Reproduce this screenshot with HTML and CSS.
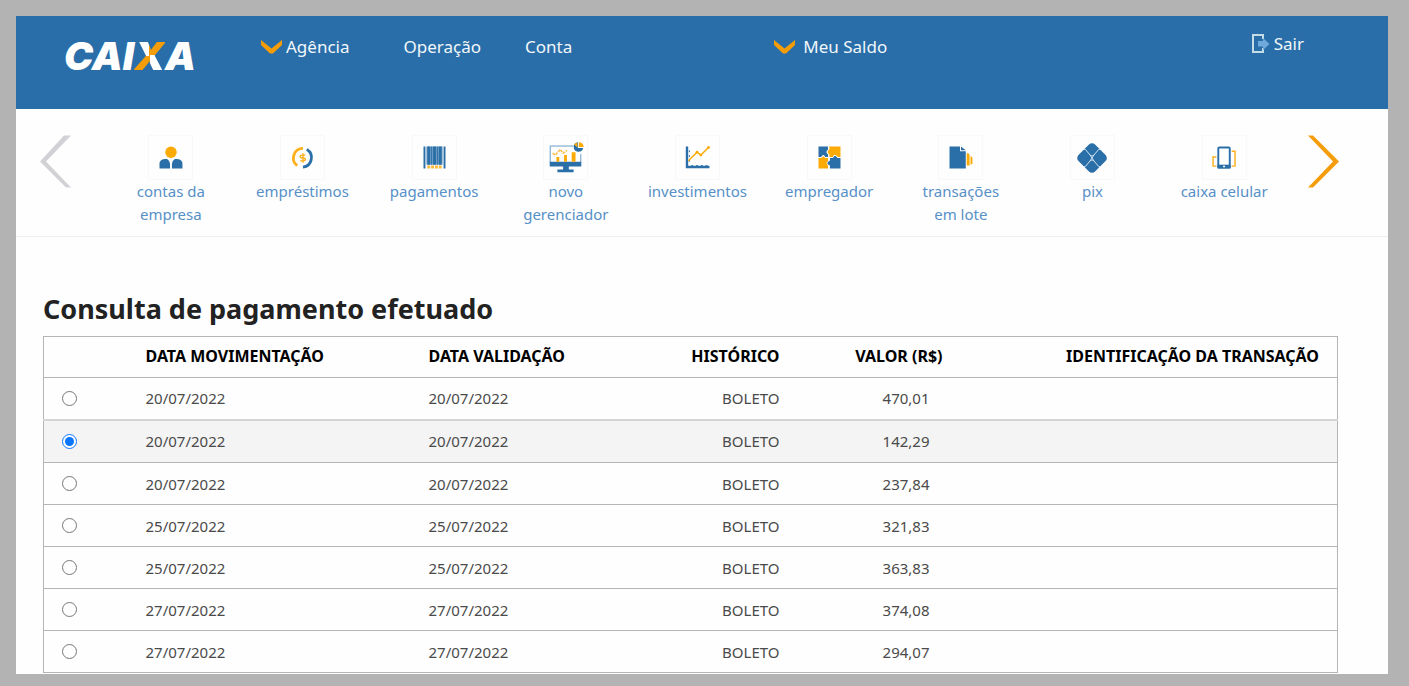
FILE: index.html
```html
<!DOCTYPE html>
<html lang="pt-BR">
<head>
<meta charset="utf-8">
<title>Consulta de pagamento efetuado</title>
<link rel="stylesheet" href="styles.css">
</head>
<body>
<div class="page">
  <header class="topbar">
    <a class="logo" href="#">CAI<span class="logo-x">X</span>A</a>
    <div class="account">
      <button class="top-link top-link-tight" type="button"><svg class="chevron" viewBox="0 0 21 14" aria-hidden="true"><path d="M0 0L10.500 8.500L21 0V5L12 13.500H9L0 5Z"/></svg>Agência</button>
      <button class="top-link" type="button">Operação</button>
      <button class="top-link" type="button">Conta</button>
    </div>
    <button class="top-link balance" type="button"><svg class="chevron" viewBox="0 0 21 14" aria-hidden="true"><path d="M0 0L10.500 8.500L21 0V5L12 13.500H9L0 5Z"/></svg>Meu Saldo</button>
    <a class="top-link exit" href="#"><svg class="exit-icon" viewBox="0 0 18 20" aria-hidden="true"><path d="M11 5V1H1V18H11V14" fill="none" stroke="#c3dce6" stroke-width="2"/><path d="M6 7H11V4L17.500 10L11 16V12.500H6Z" fill="#6fa9dc"/></svg>Sair</a>
  </header>

  <nav class="services" aria-label="Serviços">
    <button class="arrow arrow-prev" type="button" aria-label="Anterior"><svg viewBox="0 0 32 52"><path d="M24 0H31L6 26L31 52H26L0 26Z" fill="#d2d2d6"/></svg></button>
    <ul class="service-list">
      <li><a class="service" href="#"><svg class="service-icon" viewBox="0 0 45 45"><circle cx="23" cy="17" r="6" fill="#fcab06"/><path d="M11 34V28Q12 24 17 24H19Q22 26 22 29V34ZM24 34V29Q24 26 27 24H29Q34 24 35 28V34Z" fill="#2a6fa8"/></svg>contas da empresa</a></li>
      <li><a class="service" href="#"><svg class="service-icon" viewBox="0 0 45 45"><path d="M23 13A10 10 0 0 0 17 31" fill="none" stroke="#fcb01c" stroke-width="3"/><path d="M27 14A10 10 0 0 1 23 32.500" fill="none" stroke="#2a6fa8" stroke-width="3"/><path d="M25.500 20H22Q20 20 20 21.500T22 23H23.500Q25.500 23 25.500 24.500T23.500 26H20M23 18V28" fill="none" stroke="#fcb01c" stroke-width="1.500"/></svg>empréstimos</a></li>
      <li><a class="service" href="#"><svg class="service-icon" viewBox="0 0 45 45"><path d="M11 11H13V34H11ZM15 11H18V30H15ZM19 11H20V30H19ZM21 11H24V30H21ZM25 11H26V30H25ZM27 11H30V30H27ZM32 11H34V34H32Z" fill="#2a6fa8"/><path d="M14 11H31V30H14Z" fill="#2a6fa8" opacity=".65"/><path d="M15 32.500H31" stroke="#fcb83a" stroke-width="3" stroke-dasharray="3 1"/></svg>pagamentos</a></li>
      <li><a class="service" href="#"><svg class="service-icon" viewBox="0 0 45 45"><path d="M7 10.500H31M6.500 10V28M38.500 19V28" fill="none" stroke="#6198c5"/><path d="M6 27H39V32H26V35H31V38H14V35H20V32H6Z" fill="#2a6fa8"/><path d="M13 22H16V27H13ZM21 20H24V27H21ZM29 17H33V27H29Z" fill="#fcab06"/><path d="M9 18L12 20L17 14L20 18L24 15" fill="none" stroke="#fcb63a" stroke-width="1.500" stroke-dasharray="3 1"/><path d="M36.500 11.500V6.500A5 5 0 0 1 41.500 11.500Z" fill="#fcab06"/><path d="M35.500 6.500V12.500H41A5 5 0 1 1 35.500 6.500Z" fill="#2a6fa8"/><path d="M35 12L31.500 9A5 5 0 0 1 35 7Z" fill="#fcab06"/></svg>novo gerenciador</a></li>
      <li><a class="service" href="#"><svg class="service-icon" viewBox="0 0 45 45"><path d="M11.500 11V32.500H35" fill="none" stroke="#2a6fa8" stroke-width="2.500"/><path d="M14 15V30M16 31H34" stroke="#2a6fa8" stroke-width="1" stroke-dasharray="2 3"/><path d="M13 26L22 17L26 20L34 12" fill="none" stroke="#fcab06" stroke-width="1.500"/><circle cx="22" cy="17" r="1.500" fill="#fcab06"/><circle cx="26" cy="20" r="1.500" fill="#fcab06"/><circle cx="34" cy="12" r="1.500" fill="#fcab06"/></svg>investimentos</a></li>
      <li><a class="service" href="#"><svg class="service-icon" viewBox="0 0 45 45"><path d="M11 11H21V14Q18 17 21 19V22H18Q16 18 14 22H11Z" fill="#2a6fa8"/><path d="M22 11H34V22H31Q28 18 26 22H22V19Q18 17 22 14Z" fill="#fcab06"/><path d="M11 23H14Q16 19 18 23H21V26Q25 28 21 31V34H11Z" fill="#fcab06"/><path d="M23 23H26Q28 18 31 23H34V34H23V31Q18 30 21 26H23Z" fill="#2a6fa8"/><path d="M21.800 11V14Q18 17 21.800 19V26Q18 29 22 31V34M11 22.500H14Q16 19 18 22.500H26Q28 18 31 22.500H34" fill="none" stroke="#fff"/></svg>empregador</a></li>
      <li><a class="service" href="#"><svg class="service-icon" viewBox="0 0 45 45"><path d="M11 11H22V16H28V34H11Z" fill="#2a6fa8"/><path d="M23 11L28 15H23Z" fill="#2a6fa8"/><path d="M29 18H30Q32 18 32 20V31H29ZM33 21Q35 22 35 23V29L33 30Z" fill="#fcab06"/></svg>transações em lote</a></li>
      <li><a class="service" href="#"><svg class="service-icon" viewBox="0 0 45 45"><path d="M22 12L33 23L22 34L11 23Z" fill="#2a6fa8" stroke="#2a6fa8" stroke-width="9" stroke-linejoin="round"/><path d="M13 14H15L20 20Q22 22 24 20L29 14H31M13 32H15L20 26Q22 24 24 26L29 32H31M20 20L24 26M24 20L20 26" fill="none" stroke="#d6e8f6"/></svg>pix</a></li>
      <li><a class="service" href="#"><svg class="service-icon" viewBox="0 0 45 45"><rect x="16" y="12" width="12" height="21" rx="1" fill="#fff" stroke="#2a6fa8" stroke-width="2"/><path d="M15 30H29V34H15Z" fill="#2a6fa8"/><path d="M21 32H23" stroke="#fff" stroke-width="1.500"/><path d="M14 22H10.500V31.500H14M30 16H33.500V31.500H30" fill="none" stroke="#fcb01c" stroke-width="1.500"/></svg>caixa celular</a></li>
    </ul>
    <button class="arrow" type="button" aria-label="Próximo"><svg viewBox="0 0 32 52"><path d="M0 0H5L31 26L5 52H0L25 26Z" fill="#f59d08"/></svg></button>
  </nav>

  <main class="content">
    <h1 class="title">Consulta de pagamento efetuado</h1>
    <table class="payments">
      <colgroup><col class="col-pick"><col class="col-date"><col class="col-check"><col class="col-kind"><col class="col-value"><col></colgroup>
      <thead>
        <tr><th aria-label="Selecionar"></th><th>DATA MOVIMENTAÇÃO</th><th>DATA VALIDAÇÃO</th><th class="end">HISTÓRICO</th><th class="end">VALOR (R$)</th><th class="end last">IDENTIFICAÇÃO DA TRANSAÇÃO</th></tr>
      </thead>
      <tbody>
        <tr><td><input class="pick" type="radio" name="pagamento" aria-label="Boleto 470,01"></td><td>20/07/2022</td><td>20/07/2022</td><td class="end">BOLETO</td><td class="end value">470,01</td><td></td></tr>
        <tr class="selected"><td><input class="pick" type="radio" name="pagamento" aria-label="Boleto 142,29" checked></td><td>20/07/2022</td><td>20/07/2022</td><td class="end">BOLETO</td><td class="end value">142,29</td><td></td></tr>
        <tr><td><input class="pick" type="radio" name="pagamento" aria-label="Boleto 237,84"></td><td>20/07/2022</td><td>20/07/2022</td><td class="end">BOLETO</td><td class="end value">237,84</td><td></td></tr>
        <tr><td><input class="pick" type="radio" name="pagamento" aria-label="Boleto 321,83"></td><td>25/07/2022</td><td>25/07/2022</td><td class="end">BOLETO</td><td class="end value">321,83</td><td></td></tr>
        <tr><td><input class="pick" type="radio" name="pagamento" aria-label="Boleto 363,83"></td><td>25/07/2022</td><td>25/07/2022</td><td class="end">BOLETO</td><td class="end value">363,83</td><td></td></tr>
        <tr><td><input class="pick" type="radio" name="pagamento" aria-label="Boleto 374,08"></td><td>27/07/2022</td><td>27/07/2022</td><td class="end">BOLETO</td><td class="end value">374,08</td><td></td></tr>
        <tr><td><input class="pick" type="radio" name="pagamento" aria-label="Boleto 294,07"></td><td>27/07/2022</td><td>27/07/2022</td><td class="end">BOLETO</td><td class="end value">294,07</td><td></td></tr>
      </tbody>
    </table>
  </main>
</div>
</body>
</html>
```
FILE: styles.css
```css
* {
  box-sizing: border-box;
}

body {
  margin: 0;
  padding: 16px 21px 12px 16px;
  background: #b3b3b3;
  font-family: "Noto Sans", "Open Sans", sans-serif;
  font-size: 15px;
}

button {
  padding: 0;
  border: 0;
  background: none;
  font: inherit;
  cursor: pointer;
}

a {
  text-decoration: none;
}

.page {
  background: #fefefe;
}

.topbar {
  display: flex;
  align-items: flex-start;
  min-height: 93px;
  padding: 16px 84px 0 48px;
  background: #296ea8;
}

.logo {
  width: 129px;
  margin-top: 4px;
  color: #fff;
  font: italic 900 39px/40px Inter, "Open Sans", sans-serif;
  white-space: nowrap;
}

.logo-x {
  background: conic-gradient(#f59d08 25%, #fff 25% 50%, #f59d08 50% 75%, #fff 75%);
  background-clip: text;
  -webkit-background-clip: text;
  color: transparent;
}

.account {
  display: flex;
  gap: 54px;
  margin-left: 68px;
}

.account .top-link:last-child {
  margin-left: -10px;
}

.top-link {
  display: flex;
  align-items: center;
  gap: 8px;
  margin-top: 3px;
  color: #f2f7fb;
  font-size: 17px;
  line-height: 24px;
}

.top-link-tight {
  gap: 4px;
}

.chevron {
  width: 21px;
  height: 14px;
  fill: #f59d08;
}

.balance {
  margin-left: 202px;
}

.exit {
  gap: 4px;
  margin: 0 0 0 auto;
}

.exit-icon {
  width: 18px;
  height: 20px;
}

.services {
  display: flex;
  align-items: flex-start;
  min-height: 128px;
  padding: 26px 48px 8px 24px;
  border-bottom: 1px solid #eee;
}

.arrow svg {
  display: block;
  width: 32px;
  height: 53px;
}

.service-list {
  display: grid;
  flex: 1;
  grid-template-columns: repeat(9, 1fr);
  margin: 0 18px 0 33px;
  padding: 0;
  list-style: none;
}

.service {
  display: flex;
  flex-direction: column;
  align-items: center;
  max-width: 100px;
  margin: 0 auto;
  color: #5690c8;
  line-height: 23px;
  text-align: center;
}

.service-icon {
  width: 45px;
  height: 45px;
  border: 1px solid #f9f9f9;
}

.content {
  padding: 52px 50px 1px 27px;
}

.title {
  margin: 0 0 7px;
  color: #222;
  font-size: 27px;
  line-height: 40px;
}

.payments {
  width: 100%;
  border: 1px solid #b5b5b5;
  border-collapse: collapse;
  table-layout: fixed;
  color: #4a4a4a;
}

.col-pick {
  width: 92px;
}

.col-date {
  width: 283px;
}

.col-check {
  width: 247px;
}

.col-kind {
  width: 124px;
}

.col-value {
  width: 163px;
}

.payments th,
.payments td {
  height: 42px;
  padding: 0 10px;
  border-bottom: 1px solid #b5b5b5;
  text-align: left;
  white-space: nowrap;
}

.payments th {
  height: 41px;
  padding-bottom: 2px;
  color: #000;
  font-size: 16px;
}

.payments .end {
  text-align: right;
}

.payments .last {
  padding-right: 18px;
}

.payments .value {
  padding-right: 23px;
}

.payments .selected td {
  height: 43px;
}

.selected {
  border-top: 2px solid #d4d4d4;
  background: #f4f4f4;
}

.pick {
  display: block;
  width: 15px;
  height: 15px;
  margin: 0 0 0 8px;
  accent-color: #0a75ff;
}
```
